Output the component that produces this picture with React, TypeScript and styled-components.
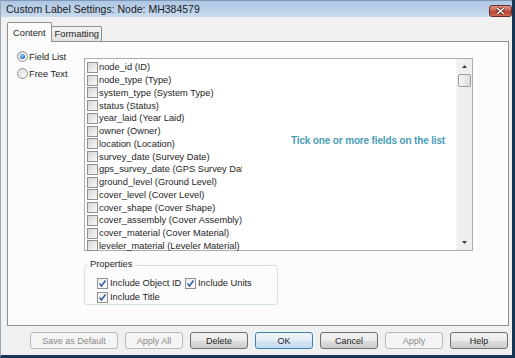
import styled, { createGlobalStyle, css } from "styled-components";

const GlobalStyle = createGlobalStyle`
  html, body {
    margin: 0;
    padding: 0;
    background: #ffffff;
  }
  body {
    font-family: "Liberation Sans", Arial, sans-serif;
    font-size: 9.3px;
    color: #1e1e1e;
  }
  * {
    box-sizing: border-box;
  }
`;

const Window = styled.div`
  width: 515px;
  height: 358px;
  display: flex;
  flex-direction: column;
  background: #f0f0f0;
  border-left: 1px solid #9aa7b4;
  border-right: 3px solid #183452;
  border-bottom: 3px solid #183452;
  overflow: hidden;
`;

const TitleBar = styled.div`
  height: 17px;
  flex: none;
  display: flex;
  align-items: center;
  justify-content: space-between;
  padding: 0 0 0 5px;
  background: linear-gradient(#aec7e4, #c9dbef);
  border-top: 1px solid #7f98b6;
`;

const Title = styled.span`
  font-size: 10.5px;
  color: #1b1b1b;
`;

const CloseButton = styled.div`
  width: 23px;
  height: 12px;
  margin-top: 3px;
  border: 1px solid #6b2a22;
  border-radius: 3px;
  background: linear-gradient(#e2958b, #c75a4c 50%, #b8402f 51%, #cf6b55);
  display: flex;
  align-items: center;
  justify-content: center;
`;

const Body = styled.div`
  flex: 1;
  display: flex;
  flex-direction: column;
  padding: 5px 3px 0 6px;
`;

const TabStrip = styled.div`
  display: flex;
  align-items: flex-end;
  height: 19px;
  position: relative;
  z-index: 1;
`;

const Tab = styled.div<{ $active?: boolean }>`
  display: flex;
  align-items: center;
  border: 1px solid #8e8f8f;
  border-bottom: none;
  border-radius: 2px 2px 0 0;
  ${(p) =>
    p.$active
      ? css`
          height: 20px;
          margin-bottom: -1px;
          background: #fcfcfc;
          padding: 0 5px;
        `
      : css`
          height: 15px;
          margin-left: -1px;
          padding: 0 2px 0 3px;
          background: linear-gradient(#f3f3f3, #e2e2e2);
        `}
`;

const Panel = styled.div`
  height: 285px;
  display: flex;
  background: #fcfcfc;
  border: 1px solid #8e8f8f;
`;

const RadioColumn = styled.div`
  width: 76px;
  padding: 6px 0 0 9px;
  display: flex;
  flex-direction: column;
`;

const RadioRow = styled.label`
  height: 17px;
  display: flex;
  align-items: center;
  gap: 1px;
`;

const RadioCircle = styled.span<{ $checked?: boolean }>`
  width: 11px;
  height: 11px;
  border-radius: 50%;
  border: 1px solid #8e8f8f;
  background: linear-gradient(135deg, #dcdcdc, #fbfbfb);
  display: flex;
  align-items: center;
  justify-content: center;
  &::after {
    content: "";
    width: 5px;
    height: 5px;
    border-radius: 50%;
    display: ${(p) => (p.$checked ? "block" : "none")};
    background: radial-gradient(circle at 40% 35%, #a6dcff, #1a68b8 70%);
  }
`;

const MainColumn = styled.div`
  display: flex;
  flex-direction: column;
  padding-top: 16px;
`;

const ListBox = styled.div`
  position: relative;
  width: 389px;
  height: 193px;
  display: flex;
  background: #ffffff;
  border: 1px solid #abadb3;
`;

const Items = styled.div`
  flex: 1;
  padding: 2px 0 0 2px;
`;

const Item = styled.div`
  width: 155px;
  height: 12.75px;
  display: flex;
  align-items: center;
  gap: 1px;
  white-space: nowrap;
  overflow: hidden;
`;

const Box = styled.span<{ $checked?: boolean }>`
  flex: none;
  width: 11px;
  height: 11px;
  border: 1px solid #8e8f8f;
  display: flex;
  align-items: center;
  justify-content: center;
  background: ${(p) =>
    p.$checked
      ? "linear-gradient(135deg, #f0f0f0, #ffffff)"
      : "linear-gradient(135deg, #d6d6d6, #fafafa)"};
`;

const Hint = styled.div`
  position: absolute;
  left: 206px;
  top: 76px;
  font-weight: bold;
  font-size: 10px;
  letter-spacing: -0.15px;
  color: #4a9db5;
  white-space: nowrap;
`;

const ScrollBar = styled.div`
  width: 16px;
  display: flex;
  flex-direction: column;
  background: #efefef;
  border-left: 1px solid #f6f6f6;
`;

const ArrowCell = styled.div`
  height: 15px;
  display: flex;
  align-items: center;
  justify-content: center;
`;

const Thumb = styled.div`
  height: 13px;
  margin: 0 1px;
  border: 1px solid #9a9a9a;
  border-radius: 2px;
  background: linear-gradient(to right, #f6f6f6, #dcdcdc);
`;

const Track = styled.div`
  flex: 1;
`;

const GroupBox = styled.div`
  position: relative;
  margin-top: 14px;
  width: 194px;
  height: 40px;
  border: 1px solid #d5dfe5;
  border-radius: 3px;
  padding: 10px 0 0 12px;
  display: grid;
  grid-template-columns: 88px auto;
  grid-auto-rows: 14px;
`;

const GroupLabel = styled.span`
  position: absolute;
  top: -7px;
  left: 3px;
  padding: 0 2px;
  background: #fcfcfc;
`;

const CheckRow = styled.label`
  display: flex;
  align-items: center;
  gap: 2px;
  white-space: nowrap;
`;

const ButtonRow = styled.div`
  display: flex;
  justify-content: flex-end;
  gap: 7px;
  margin-top: 6px;
  padding-right: 1px;
`;

const Button = styled.button<{ $wide?: boolean; $default?: boolean }>`
  width: ${(p) => (p.$wide ? "88px" : "58px")};
  height: 17px;
  padding: 0;
  font-family: "Liberation Sans", Arial, sans-serif;
  font-size: 9px;
  color: #1e1e1e;
  border: 1px solid #707070;
  border-radius: 3px;
  background: linear-gradient(#f2f2f2, #ebebeb 50%, #dddddd 51%, #cfcfcf);
  ${(p) =>
    p.$default &&
    css`
      border-color: #3c7fb1;
      background: linear-gradient(#f0f6fb, #e3eef8 50%, #d3e5f3 51%, #c6dcee);
    `}
  &:disabled {
    color: #8a8a8a;
    border-color: #b5b9bc;
    background: #f4f4f4;
  }
`;

const fields = [
  "node_id (ID)",
  "node_type (Type)",
  "system_type (System Type)",
  "status (Status)",
  "year_laid (Year Laid)",
  "owner (Owner)",
  "location (Location)",
  "survey_date (Survey Date)",
  "gps_survey_date (GPS Survey Date)",
  "ground_level (Ground Level)",
  "cover_level (Cover Level)",
  "cover_shape (Cover Shape)",
  "cover_assembly (Cover Assembly)",
  "cover_material (Cover Material)",
  "leveler_material (Leveler Material)",
];

function Check() {
  return (
    <svg width="9" height="9" viewBox="0 0 9 9">
      <path d="M1.5 4.5 L3.5 7 L7.5 1.5" fill="none" stroke="#2f5fa8" strokeWidth="1.6" />
    </svg>
  );
}

function Arrow({ down }: { down?: boolean }) {
  return (
    <svg width="5" height="3" viewBox="0 0 5 3">
      <path d={down ? "M0 0 L5 0 L2.5 3 Z" : "M0 3 L5 3 L2.5 0 Z"} fill="#404040" />
    </svg>
  );
}

export default function App() {
  return (
    <>
      <GlobalStyle />
      <Window>
        <TitleBar>
          <Title>Custom Label Settings: Node: MH384579</Title>
          <CloseButton>
            <svg width="9" height="8" viewBox="0 0 9 8">
              <path d="M1 1 L8 7 M8 1 L1 7" stroke="#5a2018" strokeWidth="3" />
              <path d="M1 1 L8 7 M8 1 L1 7" stroke="#ffffff" strokeWidth="1.6" />
            </svg>
          </CloseButton>
        </TitleBar>
        <Body>
          <TabStrip>
            <Tab $active>Content</Tab>
            <Tab>Formatting</Tab>
          </TabStrip>
          <Panel>
            <RadioColumn>
              <RadioRow>
                <RadioCircle $checked />
                Field List
              </RadioRow>
              <RadioRow>
                <RadioCircle />
                Free Text
              </RadioRow>
            </RadioColumn>
            <MainColumn>
              <ListBox>
                <Items>
                  {fields.map((f) => (
                    <Item key={f}>
                      <Box />
                      {f}
                    </Item>
                  ))}
                </Items>
                <ScrollBar>
                  <ArrowCell>
                    <Arrow />
                  </ArrowCell>
                  <Thumb />
                  <Track />
                  <ArrowCell>
                    <Arrow down />
                  </ArrowCell>
                </ScrollBar>
                <Hint>Tick one or more fields on the list</Hint>
              </ListBox>
              <GroupBox>
                <GroupLabel>Properties</GroupLabel>
                <CheckRow>
                  <Box $checked>
                    <Check />
                  </Box>
                  Include Object ID
                </CheckRow>
                <CheckRow>
                  <Box $checked>
                    <Check />
                  </Box>
                  Include Units
                </CheckRow>
                <CheckRow>
                  <Box $checked>
                    <Check />
                  </Box>
                  Include Title
                </CheckRow>
              </GroupBox>
            </MainColumn>
          </Panel>
          <ButtonRow>
            <Button $wide disabled>
              Save as Default
            </Button>
            <Button disabled>Apply All</Button>
            <Button>Delete</Button>
            <Button $default>OK</Button>
            <Button>Cancel</Button>
            <Button disabled>Apply</Button>
            <Button>Help</Button>
          </ButtonRow>
        </Body>
      </Window>
    </>
  );
}
